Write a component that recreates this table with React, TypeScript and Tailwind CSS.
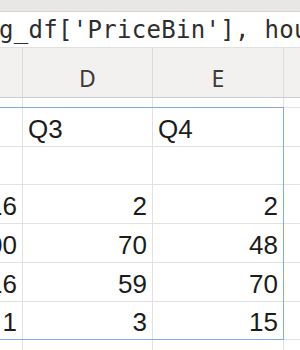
import React from "react";

type Row = { h: string; c: string; d: string; e: string };

const rows: Row[] = [
  { h: "h-[10px]", c: "", d: "", e: "" },
  { h: "h-[39px]", c: "", d: "Q3", e: "Q4" },
  { h: "h-[38px]", c: "", d: "", e: "" },
  { h: "h-[39px]", c: "16", d: "2", e: "2" },
  { h: "h-[39px]", c: "100", d: "70", e: "48" },
  { h: "h-[39px]", c: "16", d: "59", e: "70" },
  { h: "h-[38px]", c: "1", d: "3", e: "15" },
  { h: "h-[20px]", c: "", d: "", e: "" },
];

const Cell: React.FC<{ w: string; text: string }> = ({ w, text }) => {
  const isNum = /^\d+$/.test(text);
  return (
    <div
      className={`${w} shrink-0 h-full border-r border-[#e2e2e2] flex items-end pb-[2px] ${
        isNum ? "justify-end pr-[5px]" : "justify-start pl-[5px]"
      }`}
    >
      <span className="whitespace-nowrap leading-[30px]">{text}</span>
    </div>
  );
};

export default function App() {
  return (
    <div className="w-[300px] h-[350px] overflow-hidden bg-white relative">
      {/* window strip */}
      <div className="h-[12px] bg-[#e9e7e6] border-b border-[#d5d3d2]" />

      {/* formula bar */}
      <div className="h-[36px] bg-white flex items-center overflow-hidden whitespace-nowrap border-b border-[#e3e1e0]">
        <span className="-ml-[1px] font-['DejaVu_Sans_Mono',monospace] text-[24px] tracking-[0.3px] text-[#2e2e2e] leading-none">
          g_df['PriceBin'], hou
        </span>
      </div>

      {/* column headers */}
      <div className="h-[50px] bg-[#f2f1f0] border-b border-[#cfcdcc] flex font-['Noto_Sans',sans-serif] text-[23px] text-[#3a3a3a] leading-none">
        <div className="w-[23px] shrink-0 border-r border-[#dcdbda]" />
        <div className="w-[130px] shrink-0 border-r border-[#dcdbda] flex justify-center pt-[19px]">D</div>
        <div className="w-[131px] shrink-0 border-r border-[#dcdbda] flex justify-center pt-[19px]">E</div>
        <div className="flex-1" />
      </div>

      {/* grid */}
      <div className="relative font-['Liberation_Sans',Arial,sans-serif] text-[26px] text-[#1c1c1c]">
        {rows.map((r, i) => (
          <div key={i} className={`${r.h} flex border-b border-[#e2e2e2]`}>
            <Cell w="w-[23px]" text={r.c} />
            <Cell w="w-[130px]" text={r.d} />
            <Cell w="w-[131px]" text={r.e} />
            <div className="flex-1" />
          </div>
        ))}
        {/* selection */}
        <div className="absolute left-[-2px] top-[9px] w-[286px] h-[233px] border border-[#85a8e6] pointer-events-none" />
      </div>
    </div>
  );
}
